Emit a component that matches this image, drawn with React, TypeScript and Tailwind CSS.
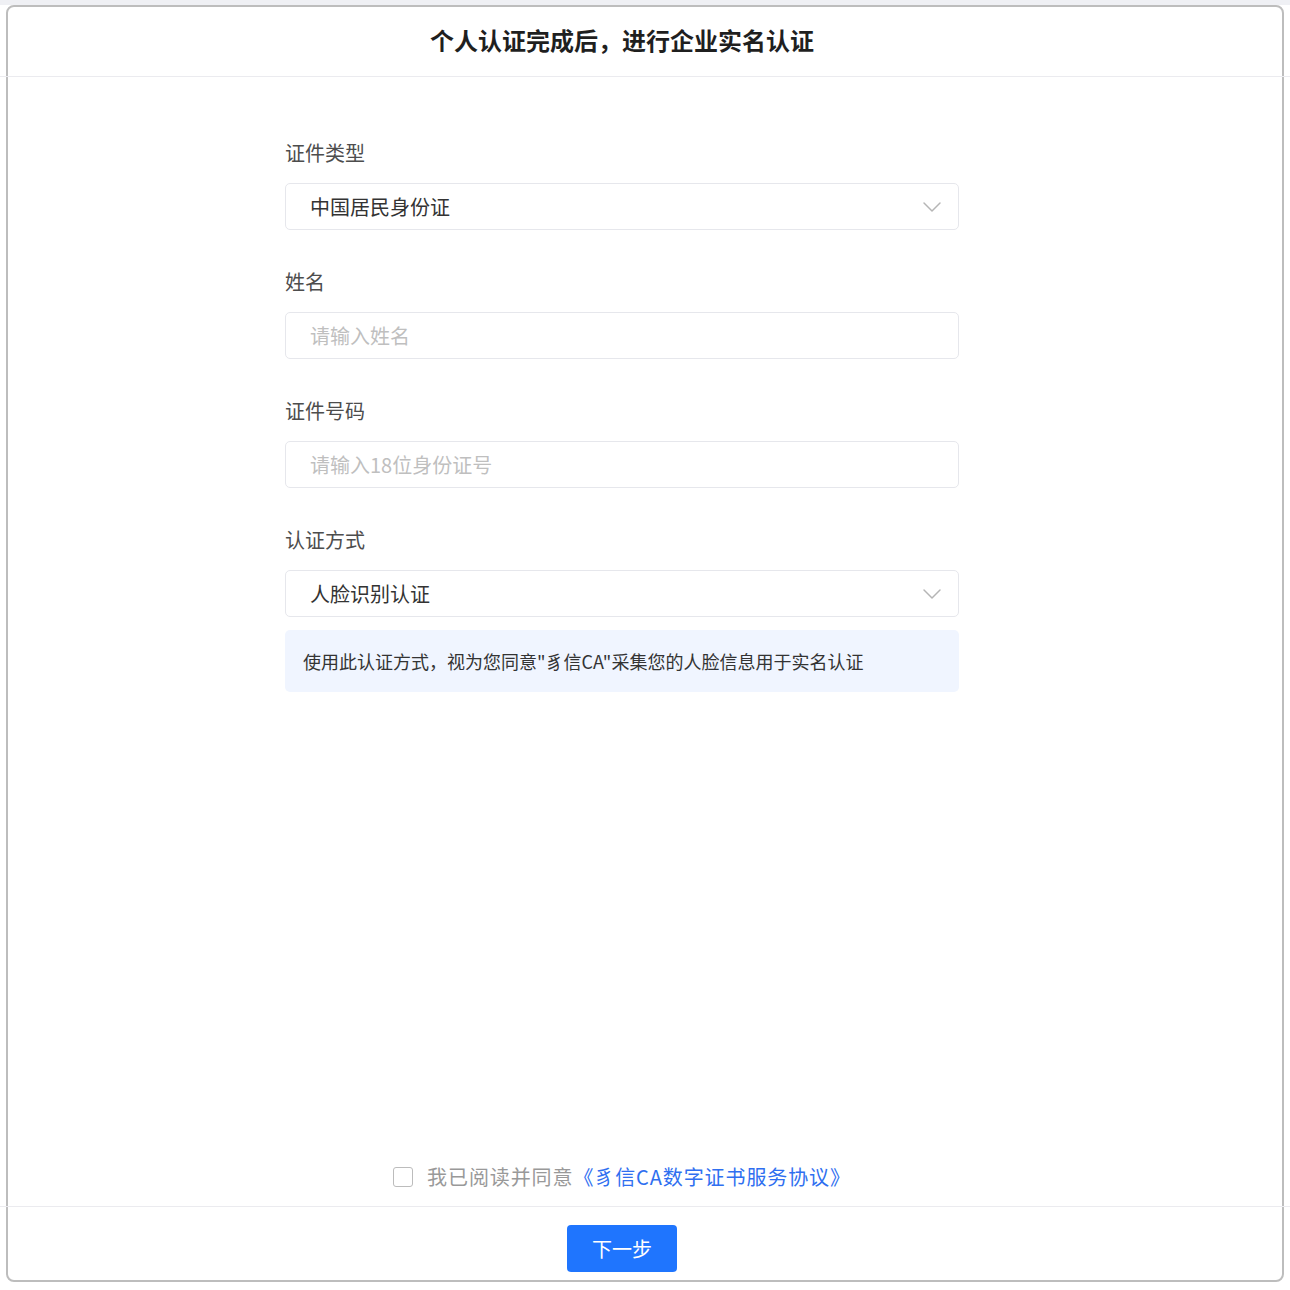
import { ChevronDown } from "lucide-react";

const FONT = "font-['Noto_Sans_CJK_SC','Noto_Sans',sans-serif]";

// Form field: label above a select or text box
function Field({
  label,
  value,
  placeholder,
  select,
}: {
  label: string;
  value?: string;
  placeholder?: string;
  select?: boolean;
}) {
  return (
    <div className="flex flex-col">
      <label className="text-[20px] leading-[28px] text-[#4d4d4d]">{label}</label>
      <div className="mt-4 h-[47px] flex items-center rounded-[5px] border border-[#e6e7ec] bg-white pl-6 pr-[10px]">
        {value ? (
          <span className="flex-1 text-[20px] leading-[28px] text-[#333]">{value}</span>
        ) : (
          <span className="flex-1 text-[20px] leading-[28px] text-[#bfbfbf]">{placeholder}</span>
        )}
        {select && <ChevronDown className="w-8 h-8 text-[#b5b5b5]" strokeWidth={1.1} />}
      </div>
    </div>
  );
}

export default function App() {
  return (
    <div className={`w-[1290px] h-[1290px] bg-white overflow-hidden ${FONT}`}>
      <div className="h-[5px] bg-[#eff0f4]" />
      <div className="ml-[6px] w-[1278px] h-[1277px] border-2 border-[#bdbdbd] rounded-[8px] flex flex-col">
        {/* Header */}
        <div className="h-[69px] w-[1228px] flex items-center justify-center pb-[3px]">
          <h1 className="text-[24px] leading-[32px] font-bold text-[#1f1f1f]">
            个人认证完成后，进行企业实名认证
          </h1>
        </div>
        <div className="-mx-[8px] h-px bg-[#ebebef]" />

        {/* Form */}
        <div className="w-[1228px] flex justify-center pt-[62px]">
          <div className="w-[674px] flex flex-col gap-[38px]">
            <Field label="证件类型" value="中国居民身份证" select />
            <Field label="姓名" placeholder="请输入姓名" />
            <Field label="证件号码" placeholder="请输入18位身份证号" />
            <div className="flex flex-col">
              <Field label="认证方式" value="人脸识别认证" select />
              <div className="mt-[13px] h-[62px] flex items-center rounded-[5px] bg-[#f0f5ff] px-[18px]">
                <span className="text-[18px] leading-[26px] text-[#333]">
                  使用此认证方式，视为您同意"豸信CA"采集您的人脸信息用于实名认证
                </span>
              </div>
            </div>
          </div>
        </div>

        <div className="flex-1" />

        {/* Agreement */}
        <div className="w-[1228px] flex justify-center items-center gap-[14px] mb-[15px] h-[28px]">
          <span className="w-5 h-5 rounded-[3px] border-[1.5px] border-[#bcbcbc] bg-white" />
          <span className="text-[20px] leading-[28px] tracking-[0.9px] text-[#999]">
            我已阅读并同意
            <span className="text-[#2f6ff0]">《豸信CA数字证书服务协议》</span>
          </span>
        </div>
        <div className="-mx-[8px] h-px bg-[#ebebef]" />

        {/* Footer */}
        <div className="w-[1228px] flex justify-center pt-[18px] pb-[8px]">
          <button className="w-[110px] h-[47px] rounded-[4px] bg-[#1f75fe] text-white text-[20px] leading-[28px]">
            下一步
          </button>
        </div>
      </div>
    </div>
  );
}
